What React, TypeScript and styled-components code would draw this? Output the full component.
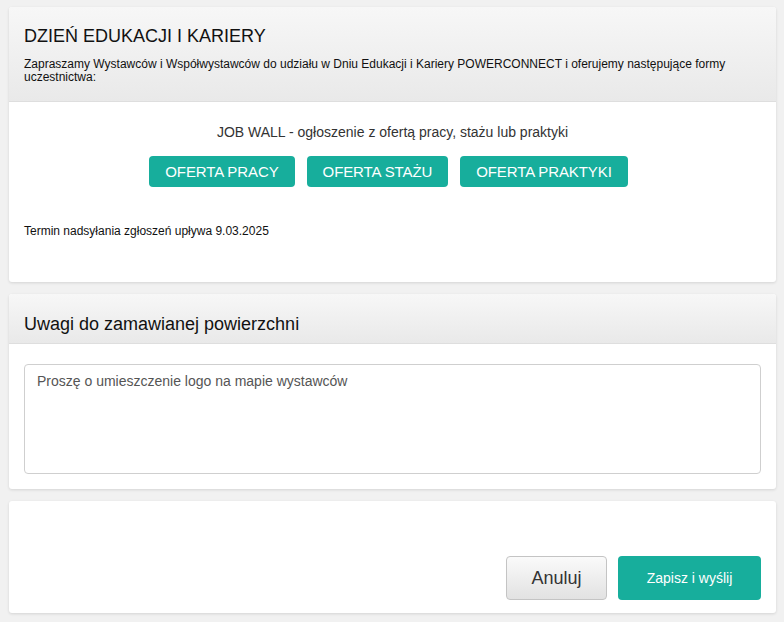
import styled, { createGlobalStyle } from "styled-components";

const GlobalStyle = createGlobalStyle`
  html, body {
    margin: 0;
    padding: 0;
    background: #f1f1f1;
    font-family: "Liberation Sans", Arial, sans-serif;
    color: #222;
  }
`;

const Page = styled.div`
  display: flex;
  flex-direction: column;
  gap: 12px;
  padding: 7px 8px 10px 9px;
`;

const Card = styled.div`
  background: #fff;
  border-radius: 3px;
  box-shadow: 0 1px 3px rgba(0, 0, 0, 0.12);
  overflow: hidden;
`;

const CardHeader = styled.div<{ tall?: boolean }>`
  background: linear-gradient(#f7f7f7, #e9e9e9);
  border-bottom: 1px solid #dedede;
  padding: ${(p) => (p.tall ? "19px 15px 17px 15px" : "20px 15px 0 15px")};
  height: ${(p) => (p.tall ? "auto" : "50px")};
  box-sizing: border-box;
`;

const Title = styled.h2`
  font-size: 18px;
  font-weight: normal;
  margin: 0;
  color: #111;
`;

const Intro = styled.p`
  font-size: 12px;
  line-height: 13px;
  margin: 11px 0 0 0;
  color: #111;
`;

const CardBody = styled.div`
  padding: 20px 15px 15px 15px;
`;

const Lead = styled.p`
  text-align: center;
  font-size: 14px;
  color: #333;
  margin: 2px 0 0 0;
`;

const Offers = styled.div`
  display: flex;
  justify-content: center;
  gap: 12px;
  margin-top: 16px;
  padding-right: 8px;
`;

const Offer = styled.button`
  height: 31px;
  padding: 0 16px;
  border: none;
  border-radius: 4px;
  background: #17ae9c;
  color: #fff;
  font-family: "Liberation Sans", Arial, sans-serif;
  font-size: 15px;
  letter-spacing: -0.1px;
  text-transform: uppercase;
  cursor: pointer;
`;

const Deadline = styled.p`
  font-size: 12px;
  color: #111;
  margin: 37px 0 29px 0;
`;

const Notes = styled.textarea`
  display: block;
  width: 100%;
  box-sizing: border-box;
  height: 110px;
  border: 1px solid #cfcfcf;
  border-radius: 4px;
  padding: 8px 12px;
  font-family: "Liberation Sans", Arial, sans-serif;
  font-size: 14px;
  color: #555;
  resize: none;
`;

const NotesBody = styled.div`
  padding: 20px 15px 15px 15px;
`;

const Footer = styled.div`
  display: flex;
  justify-content: flex-end;
  align-items: center;
  gap: 11px;
  padding: 55px 15px 13px 15px;
`;

const Action = styled.button<{ primary?: boolean }>`
  height: 44px;
  padding: 0;
  width: ${(p) => (p.primary ? "143px" : "101px")};
  border-radius: 4px;
  font-family: "Liberation Sans", Arial, sans-serif;
  font-size: ${(p) => (p.primary ? "14px" : "18px")};
  cursor: pointer;
  color: ${(p) => (p.primary ? "#fff" : "#333")};
  border: ${(p) => (p.primary ? "none" : "1px solid #c4c4c4")};
  background: ${(p) =>
    p.primary ? "#17ae9c" : "linear-gradient(#fafafa, #e2e2e2)"};
`;

const offers = ["Oferta pracy", "Oferta stażu", "Oferta praktyki"];

function App() {
  return (
    <>
      <GlobalStyle />
      <Page>
        <Card>
          <CardHeader tall>
            <Title>DZIEŃ EDUKACJI I KARIERY</Title>
            <Intro>
              Zapraszamy Wystawców i Współwystawców do udziału w Dniu Edukacji i
              Kariery POWERCONNECT i oferujemy następujące formy uczestnictwa:
            </Intro>
          </CardHeader>
          <CardBody>
            <Lead>JOB WALL - ogłoszenie z ofertą pracy, stażu lub praktyki</Lead>
            <Offers>
              {offers.map((o) => (
                <Offer key={o}>{o}</Offer>
              ))}
            </Offers>
            <Deadline>Termin nadsyłania zgłoszeń upływa 9.03.2025</Deadline>
          </CardBody>
        </Card>
        <Card>
          <CardHeader>
            <Title>Uwagi do zamawianej powierzchni</Title>
          </CardHeader>
          <NotesBody>
            <Notes defaultValue="Proszę o umieszczenie logo na mapie wystawców" />
          </NotesBody>
        </Card>
        <Card>
          <Footer>
            <Action>Anuluj</Action>
            <Action primary>Zapisz i wyślij</Action>
          </Footer>
        </Card>
      </Page>
    </>
  );
}

export default App;
